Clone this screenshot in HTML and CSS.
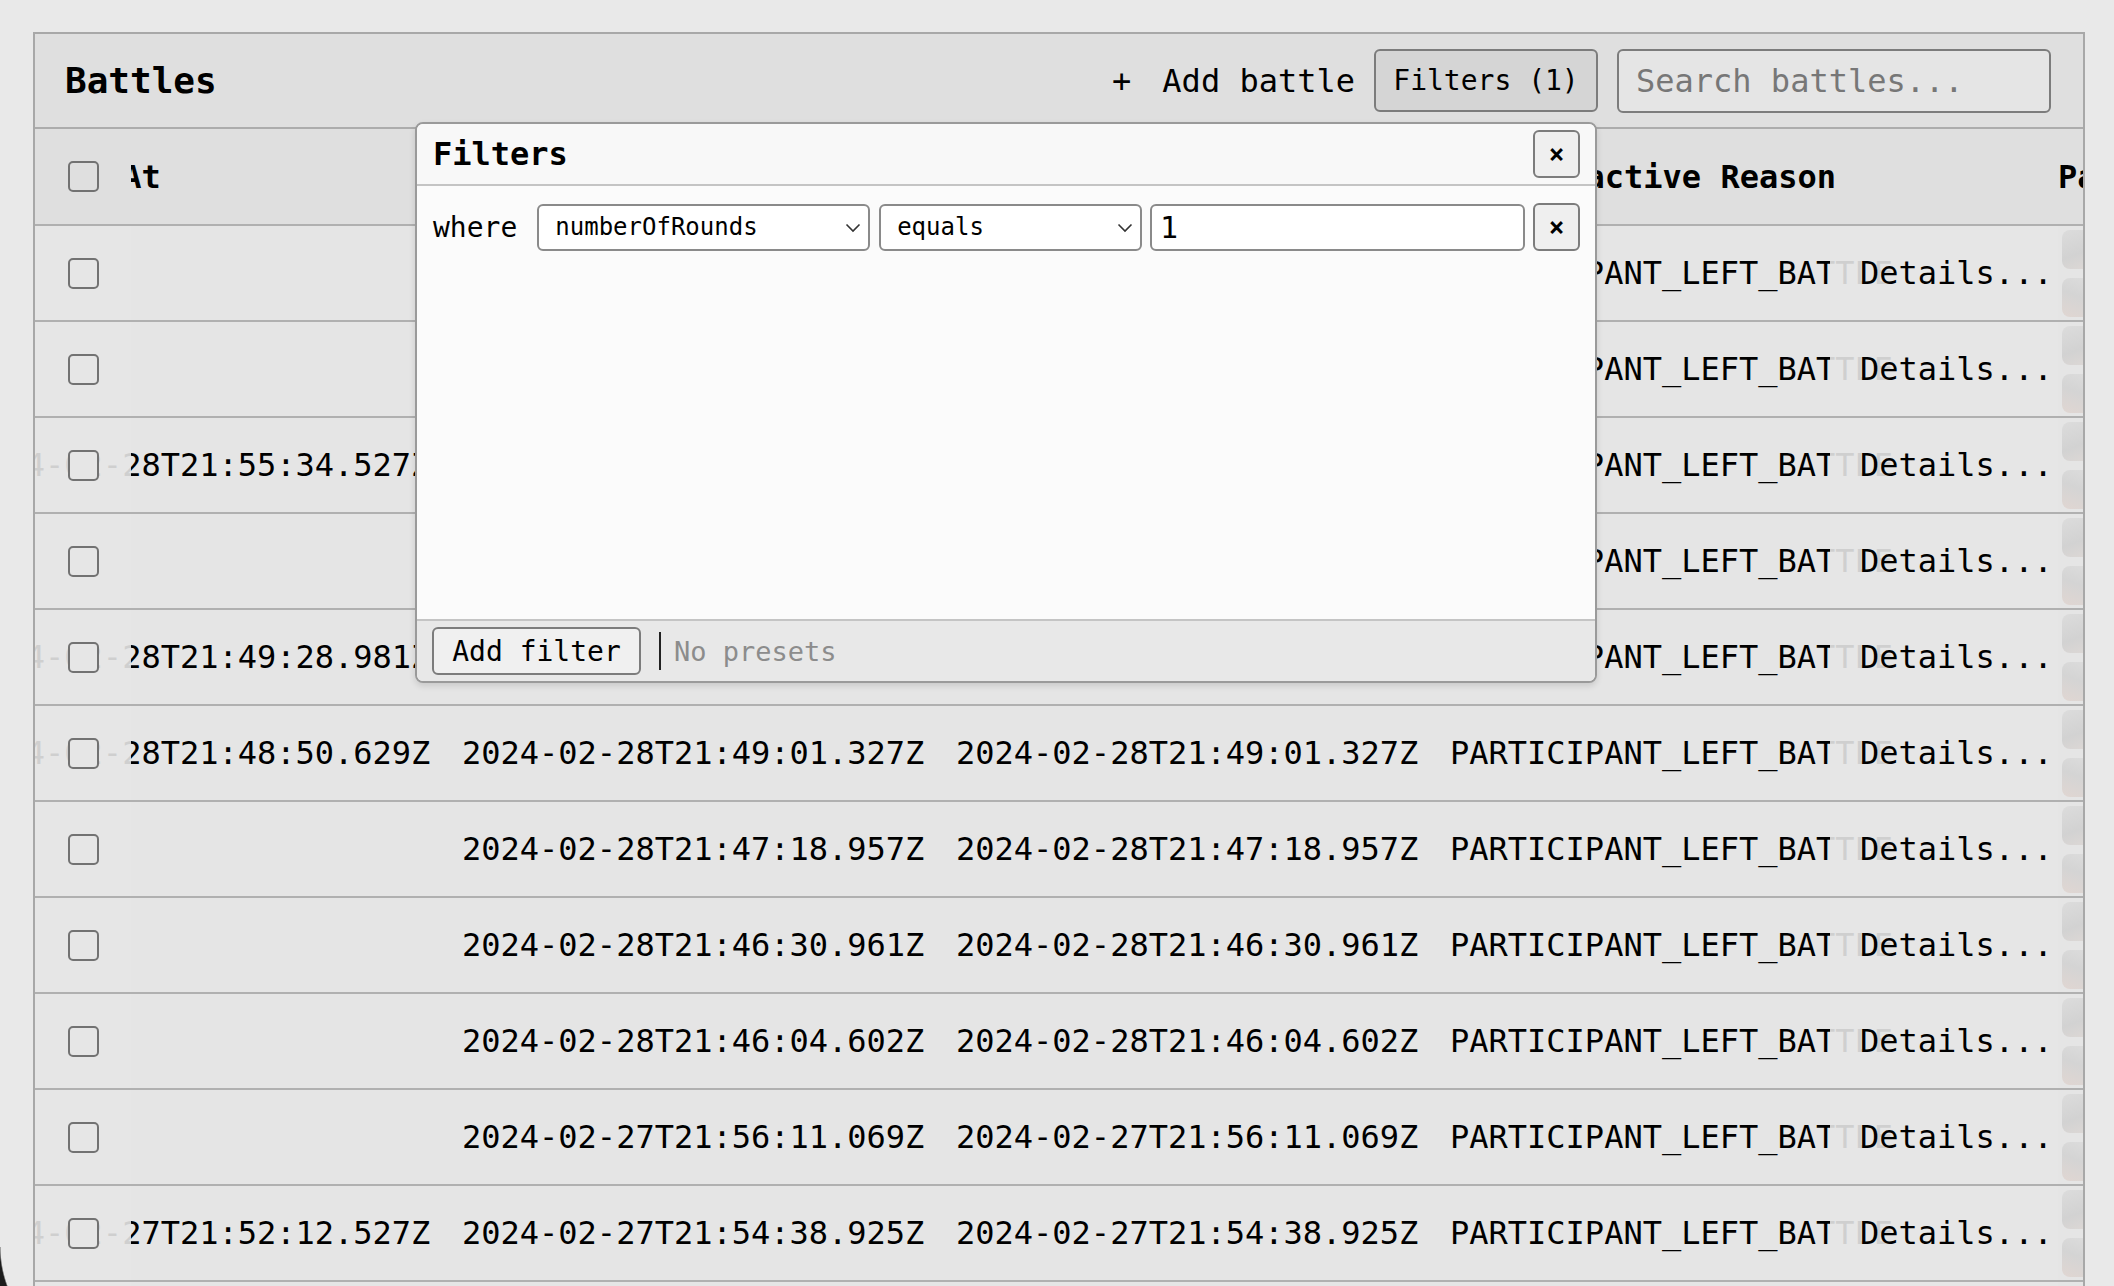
FILE: index.html
```html
<!DOCTYPE html>
<html lang="en">
<head>
<meta charset="utf-8">
<title>Battles</title>
<link rel="stylesheet" href="styles.css">
</head>
<body>
<section class="panel">
  <header class="panel-head">
    <h1 class="title">Battles</h1>
    <div class="actions">
      <button class="link-btn"><span class="plus">+</span>Add battle</button>
      <button class="btn filters-btn">Filters (1)</button>
      <input class="search" type="text" placeholder="Search battles...">
    </div>
  </header>

  <div class="table">
    <div class="row head">
      <div class="cell check"><input type="checkbox" class="cb"></div>
      <div class="cell c1">Created At</div>
      <div class="cell c2">Started At</div>
      <div class="cell c3">Ended At</div>
      <div class="cell c4 c4-head">Inactive Reason</div>
      <div class="cell details"></div>
      <div class="cell parts">Participants</div>
    </div>

    <div class="row">
      <div class="cell check"><input type="checkbox" class="cb"></div>
      <div class="cell c1"></div>
      <div class="cell c2">2024-02-28T22:01:12.114Z</div>
      <div class="cell c3">2024-02-28T22:01:12.114Z</div>
      <div class="cell c4">PARTICIPANT_LEFT_BATTLE</div>
      <div class="cell details">Details...</div>
      <div class="cell parts"><span class="av"></span><span class="av av2"></span></div>
    </div>
    <div class="row">
      <div class="cell check"><input type="checkbox" class="cb"></div>
      <div class="cell c1"></div>
      <div class="cell c2">2024-02-28T21:58:40.502Z</div>
      <div class="cell c3">2024-02-28T21:58:40.502Z</div>
      <div class="cell c4">PARTICIPANT_LEFT_BATTLE</div>
      <div class="cell details">Details...</div>
      <div class="cell parts"><span class="av"></span><span class="av av2"></span></div>
    </div>
    <div class="row">
      <div class="cell check"><input type="checkbox" class="cb"></div>
      <div class="cell c1">2024-02-28T21:55:34.527Z</div>
      <div class="cell c2">2024-02-28T21:55:48.210Z</div>
      <div class="cell c3">2024-02-28T21:55:48.210Z</div>
      <div class="cell c4">PARTICIPANT_LEFT_BATTLE</div>
      <div class="cell details">Details...</div>
      <div class="cell parts"><span class="av"></span><span class="av av2"></span></div>
    </div>
    <div class="row">
      <div class="cell check"><input type="checkbox" class="cb"></div>
      <div class="cell c1"></div>
      <div class="cell c2">2024-02-28T21:52:03.775Z</div>
      <div class="cell c3">2024-02-28T21:52:03.775Z</div>
      <div class="cell c4">PARTICIPANT_LEFT_BATTLE</div>
      <div class="cell details">Details...</div>
      <div class="cell parts"><span class="av"></span><span class="av av2"></span></div>
    </div>
    <div class="row">
      <div class="cell check"><input type="checkbox" class="cb"></div>
      <div class="cell c1">2024-02-28T21:49:28.981Z</div>
      <div class="cell c2">2024-02-28T21:49:40.044Z</div>
      <div class="cell c3">2024-02-28T21:49:40.044Z</div>
      <div class="cell c4">PARTICIPANT_LEFT_BATTLE</div>
      <div class="cell details">Details...</div>
      <div class="cell parts"><span class="av"></span><span class="av av2"></span></div>
    </div>
    <div class="row">
      <div class="cell check"><input type="checkbox" class="cb"></div>
      <div class="cell c1">2024-02-28T21:48:50.629Z</div>
      <div class="cell c2">2024-02-28T21:49:01.327Z</div>
      <div class="cell c3">2024-02-28T21:49:01.327Z</div>
      <div class="cell c4">PARTICIPANT_LEFT_BATTLE</div>
      <div class="cell details">Details...</div>
      <div class="cell parts"><span class="av"></span><span class="av av2"></span></div>
    </div>
    <div class="row">
      <div class="cell check"><input type="checkbox" class="cb"></div>
      <div class="cell c1"></div>
      <div class="cell c2">2024-02-28T21:47:18.957Z</div>
      <div class="cell c3">2024-02-28T21:47:18.957Z</div>
      <div class="cell c4">PARTICIPANT_LEFT_BATTLE</div>
      <div class="cell details">Details...</div>
      <div class="cell parts"><span class="av"></span><span class="av av2"></span></div>
    </div>
    <div class="row">
      <div class="cell check"><input type="checkbox" class="cb"></div>
      <div class="cell c1"></div>
      <div class="cell c2">2024-02-28T21:46:30.961Z</div>
      <div class="cell c3">2024-02-28T21:46:30.961Z</div>
      <div class="cell c4">PARTICIPANT_LEFT_BATTLE</div>
      <div class="cell details">Details...</div>
      <div class="cell parts"><span class="av"></span><span class="av av2"></span></div>
    </div>
    <div class="row">
      <div class="cell check"><input type="checkbox" class="cb"></div>
      <div class="cell c1"></div>
      <div class="cell c2">2024-02-28T21:46:04.602Z</div>
      <div class="cell c3">2024-02-28T21:46:04.602Z</div>
      <div class="cell c4">PARTICIPANT_LEFT_BATTLE</div>
      <div class="cell details">Details...</div>
      <div class="cell parts"><span class="av"></span><span class="av av2"></span></div>
    </div>
    <div class="row">
      <div class="cell check"><input type="checkbox" class="cb"></div>
      <div class="cell c1"></div>
      <div class="cell c2">2024-02-27T21:56:11.069Z</div>
      <div class="cell c3">2024-02-27T21:56:11.069Z</div>
      <div class="cell c4">PARTICIPANT_LEFT_BATTLE</div>
      <div class="cell details">Details...</div>
      <div class="cell parts"><span class="av"></span><span class="av av2"></span></div>
    </div>
    <div class="row">
      <div class="cell check"><input type="checkbox" class="cb"></div>
      <div class="cell c1">2024-02-27T21:52:12.527Z</div>
      <div class="cell c2">2024-02-27T21:54:38.925Z</div>
      <div class="cell c3">2024-02-27T21:54:38.925Z</div>
      <div class="cell c4">PARTICIPANT_LEFT_BATTLE</div>
      <div class="cell details">Details...</div>
      <div class="cell parts"><span class="av"></span><span class="av av2"></span></div>
    </div>
    <div class="row">
      <div class="cell check"><input type="checkbox" class="cb"></div>
      <div class="cell c1"></div>
      <div class="cell c2">2024-02-27T21:50:07.311Z</div>
      <div class="cell c3">2024-02-27T21:50:07.311Z</div>
      <div class="cell c4">PARTICIPANT_LEFT_BATTLE</div>
      <div class="cell details">Details...</div>
      <div class="cell parts"><span class="av"></span><span class="av av2"></span></div>
    </div>
  </div>

  <div class="popup">
    <div class="popup-head">
      <span class="popup-title">Filters</span>
      <button class="btn icon-btn">×</button>
    </div>
    <div class="popup-body">
      <div class="filter-row">
        <span class="where">where</span>
        <div class="select-wrap field-wide">
          <select class="select"><option>numberOfRounds</option></select>
          <svg class="chev" width="16" height="10" viewBox="0 0 16 10"><path d="M1.5 1.5 L8 8 L14.5 1.5" fill="none" stroke="#333" stroke-width="1.6"/></svg>
        </div>
        <div class="select-wrap field-op">
          <select class="select"><option>equals</option></select>
          <svg class="chev" width="16" height="10" viewBox="0 0 16 10"><path d="M1.5 1.5 L8 8 L14.5 1.5" fill="none" stroke="#333" stroke-width="1.6"/></svg>
        </div>
        <input class="value" type="text" value="1">
        <button class="btn icon-btn">×</button>
      </div>
    </div>
    <div class="popup-foot">
      <button class="btn add-filter">Add filter</button>
      <span class="sep"></span>
      <span class="presets">No presets</span>
    </div>
  </div>
</section>
<div class="win-corner"></div>
</body>
</html>
```

FILE: styles.css
```css
html, body {
  margin: 0;
  padding: 0;
}
body {
  background: #e9e9e9;
  font-family: "DejaVu Sans Mono", "Liberation Mono", monospace;
  color: #000;
  height: 1286px;
  overflow: hidden;
}
button, input, select {
  font-family: "DejaVu Sans Mono", "Liberation Mono", monospace;
  color: #000;
}

.panel {
  position: relative;
  margin: 32px 29px 0 33px;
  border: 2px solid #a8a8a8;
  border-bottom: none;
  background: #e5e5e5;
  height: 1300px;
}

.panel-head {
  box-sizing: border-box;
  height: 95px;
  border-bottom: 2px solid #acacac;
  background: #dfdfdf;
  display: flex;
  align-items: center;
  justify-content: space-between;
  padding: 0 32px 0 30px;
}
.title {
  margin: 0;
  font-size: 36px;
  font-weight: bold;
}
.actions {
  display: flex;
  align-items: center;
  gap: 19px;
}
.link-btn {
  background: none;
  border: none;
  padding: 0;
  font-size: 32px;
  display: flex;
  align-items: center;
}
.plus {
  margin-right: 31px;
}
.btn {
  background: #efefef;
  border: 2px solid #7c7c7c;
  border-radius: 6px;
  font-size: 28px;
  box-sizing: border-box;
  cursor: pointer;
}
.filters-btn {
  width: 224px;
  height: 63px;
  background: #d5d5d5;
  padding: 0;
}
.search {
  box-sizing: border-box;
  width: 434px;
  height: 64px;
  border: 2px solid #7c7c7c;
  border-radius: 6px;
  background: #e5e5e5;
  font-size: 32px;
  padding: 0 17px;
}
.search::placeholder {
  color: #777;
}

.table {
  overflow: hidden;
}
.row {
  display: flex;
  box-sizing: border-box;
  height: 96px;
  border-bottom: 2px solid #b0b0b0;
  font-size: 32px;
  white-space: nowrap;
}
.row.head {
  height: 97px;
  background: #dfdfdf;
  font-weight: bold;
}
.cell {
  flex: none;
  box-sizing: border-box;
  display: flex;
  align-items: center;
}
.check {
  position: relative;
  z-index: 1;
  width: 96px;
  justify-content: center;
  background: rgba(229, 229, 229, 0.9);
}
.head .check {
  background: #dfdfdf;
}
.cb {
  appearance: none;
  -webkit-appearance: none;
  margin: 0;
  width: 31px;
  height: 31px;
  box-sizing: border-box;
  border: 2px solid #727272;
  border-radius: 5px;
  background: #e6e6e6;
}
.head .cb {
  background: #dfdfdf;
}
.c1 {
  width: 494px;
  margin-left: -179px;
  padding: 0 16px;
}
.c2, .c3 {
  width: 494px;
  padding: 0 16px;
}
.c4 {
  width: 396px;
  padding-left: 16px;
  overflow: visible;
}
.c4-head {
  padding-left: 113px;
}
.details {
  position: relative;
  z-index: 1;
  width: 228px;
  padding-left: 30px;
  background: rgba(229, 229, 229, 0.9);
}
.head .details {
  background: transparent;
}
.parts {
  width: 200px;
  padding-left: 4px;
  flex-direction: column;
  align-items: flex-start;
  justify-content: center;
  gap: 9px;
}
.head .parts {
  padding-left: 0;
  flex-direction: row;
  align-items: center;
  justify-content: flex-start;
}
.av {
  display: block;
  width: 40px;
  height: 39px;
  border-radius: 8px;
  background: linear-gradient(160deg, #dcdcdc 0%, #d2d2d2 55%, #dfd9d6 100%);
}
.av2 {
  background: linear-gradient(200deg, #dedede 0%, #d4d4d4 50%, #e0d6d2 100%);
}

/* Filters popup */
.popup {
  position: absolute;
  left: 380px;
  top: 88px;
  width: 1182px;
  height: 561px;
  box-sizing: border-box;
  border: 2px solid #9a9a9a;
  border-radius: 8px;
  background: #fbfbfb;
  box-shadow: 0 3px 6px rgba(0, 0, 0, 0.12);
  display: flex;
  flex-direction: column;
  overflow: hidden;
  z-index: 5;
}
.popup-head {
  box-sizing: border-box;
  height: 62px;
  flex: none;
  border-bottom: 2px solid #c4c4c4;
  background: #f8f8f8;
  display: flex;
  align-items: center;
  justify-content: space-between;
  padding: 0 15px 0 16px;
}
.popup-title {
  font-size: 32px;
  font-weight: bold;
}
.icon-btn {
  width: 47px;
  height: 48px;
  padding: 0;
  font-size: 26px;
  font-weight: bold;
  line-height: 1;
}
.popup-body {
  flex: 1;
  padding: 17px 15px 0 16px;
}
.filter-row {
  display: flex;
  align-items: center;
}
.where {
  font-size: 28px;
  margin-right: 20px;
}
.select-wrap {
  position: relative;
  margin-right: 9px;
}
.field-wide { width: 333px; }
.field-op { width: 263px; margin-right: 8px; }
.select {
  appearance: none;
  -webkit-appearance: none;
  width: 100%;
  height: 47px;
  box-sizing: border-box;
  border: 2px solid #8a8a8a;
  border-radius: 6px;
  background: #fff;
  font-size: 24px;
  padding: 0 16px;
  display: block;
}
.chev {
  position: absolute;
  right: 9px;
  top: 19px;
  pointer-events: none;
}
.value {
  box-sizing: border-box;
  width: 375px;
  height: 47px;
  border: 2px solid #8a8a8a;
  border-radius: 6px;
  background: #fff;
  font-size: 30px;
  padding: 0 8px;
  margin-right: 8px;
}
.popup-foot {
  box-sizing: border-box;
  height: 62px;
  flex: none;
  border-top: 2px solid #c4c4c4;
  background: #e8e8e8;
  display: flex;
  align-items: center;
  padding: 0 15px;
}
.add-filter {
  width: 209px;
  height: 48px;
  padding: 0;
  background: #f0f0f0;
}
.sep {
  width: 2px;
  height: 38px;
  background: #222;
  margin: 0 13px 0 18px;
}
.presets {
  font-size: 27px;
  color: #8c8c8c;
}

/* rounded window corner at the bottom-left of the capture */
.win-corner {
  position: fixed;
  left: 0;
  bottom: 0;
  width: 20px;
  height: 39px;
  background: radial-gradient(circle 112px at 112px 0, transparent 111px, #1c1c1c 112.5px);
}
```
